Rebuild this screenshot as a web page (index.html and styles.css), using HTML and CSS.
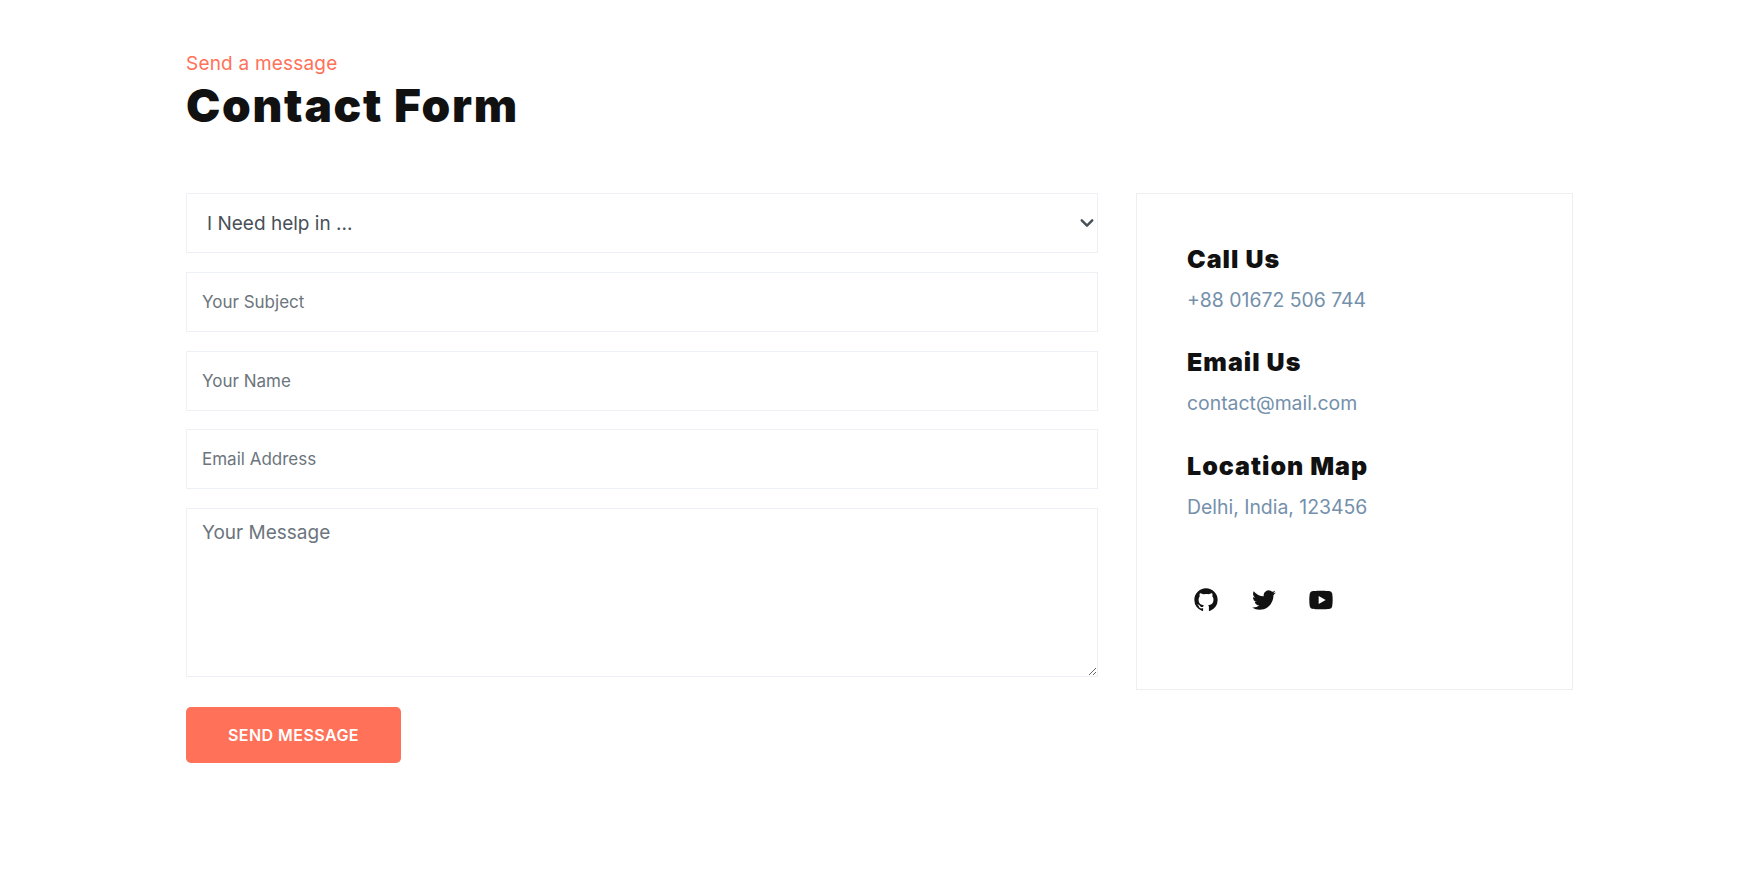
FILE: index.html
```html
<!DOCTYPE html>
<html lang="en">
<head>
	<meta charset="UTF-8">
	<title>Contact Form</title>
	<link rel="stylesheet" href="styles.css">
</head>
<body>
	<section class="contact">
		<div class="section-title">
			<span class="subtitle">Send a message</span>
			<h2>Contact Form</h2>
		</div>
		<div class="contact-row">
			<form class="contact-form">
				<select class="field field-select">
					<option>I Need help in ...</option>
				</select>
				<input class="field" type="text" placeholder="Your Subject">
				<input class="field" type="text" placeholder="Your Name">
				<input class="field" type="email" placeholder="Email Address">
				<textarea class="field field-message" placeholder="Your Message"></textarea>
				<button class="send-btn" type="button">SEND MESSAGE</button>
			</form>
			<aside class="contact-info">
				<div class="info-item">
					<h4>Call Us</h4>
					<p>+88 01672 506 744</p>
				</div>
				<div class="info-item">
					<h4>Email Us</h4>
					<p>contact@mail.com</p>
				</div>
				<div class="info-item">
					<h4>Location Map</h4>
					<p>Delhi, India, 123456</p>
				</div>
				<div class="social">
					<a href="#" aria-label="GitHub">
						<svg viewBox="0 0 24 24"><path d="M12 2C6.475 2 2 6.475 2 12a9.994 9.994 0 0 0 6.838 9.488c.5.087.687-.213.687-.476 0-.237-.013-1.024-.013-1.862-2.512.463-3.162-.612-3.362-1.175-.113-.288-.6-1.175-1.025-1.413-.35-.187-.85-.65-.013-.662.788-.013 1.35.725 1.538 1.025.9 1.512 2.338 1.087 2.912.825.088-.65.35-1.087.638-1.337-2.225-.25-4.55-1.113-4.55-4.938 0-1.088.387-1.987 1.025-2.688-.1-.25-.45-1.275.1-2.65 0 0 .837-.262 2.75 1.026a9.28 9.28 0 0 1 2.5-.338c.85 0 1.7.112 2.5.337 1.912-1.3 2.75-1.024 2.75-1.024.55 1.375.2 2.4.1 2.65.637.7 1.025 1.587 1.025 2.687 0 3.838-2.337 4.688-4.562 4.938.362.312.675.912.675 1.85 0 1.337-.013 2.412-.013 2.75 0 .262.188.574.688.474A10.016 10.016 0 0 0 22 12c0-5.525-4.475-10-10-10z"/></svg>
					</a>
					<a href="#" aria-label="Twitter">
						<svg viewBox="0 0 24 24"><path d="M22.162 5.656a8.384 8.384 0 0 1-2.402.658A4.196 4.196 0 0 0 21.6 4c-.82.488-1.719.83-2.656 1.015a4.182 4.182 0 0 0-7.126 3.814 11.874 11.874 0 0 1-8.62-4.37 4.168 4.168 0 0 0-.566 2.103c0 1.45.738 2.731 1.86 3.481a4.168 4.168 0 0 1-1.894-.523v.052a4.185 4.185 0 0 0 3.355 4.101 4.21 4.21 0 0 1-1.89.072A4.185 4.185 0 0 0 7.97 16.65a8.394 8.394 0 0 1-6.191 1.732 11.83 11.83 0 0 0 6.41 1.88c7.693 0 11.9-6.373 11.9-11.9 0-.18-.005-.362-.013-.54a8.496 8.496 0 0 0 2.087-2.165z"/></svg>
					</a>
					<a href="#" aria-label="YouTube">
						<svg viewBox="0 0 24 24"><path d="M21.543 6.498C22 8.28 22 12 22 12s0 3.72-.457 5.502c-.254.985-.997 1.76-1.938 2.022C17.896 20 12 20 12 20s-5.893 0-7.605-.476c-.945-.266-1.687-1.04-1.938-2.022C2 15.72 2 12 2 12s0-3.72.457-5.502c.254-.985.997-1.76 1.938-2.022C6.107 4 12 4 12 4s5.896 0 7.605.476c.945.266 1.687 1.04 1.938 2.022zM10 15.5l6-3.5-6-3.5v7z"/></svg>
					</a>
				</div>
			</aside>
		</div>
	</section>
</body>
</html>
```

FILE: styles.css
```css
* {
	box-sizing: border-box;
	padding: 0;
	margin: 0;
}
body {
	font-family: "Inter", "Noto Sans", sans-serif;
	color: #111;
	background-color: #fff;
}
.contact {
	width: 1387px;
	margin-left: 186px;
	padding-top: 50px;
}
.section-title {
	height: 143px;
}
.subtitle {
	display: block;
	font-size: 19px;
	line-height: 27px;
	letter-spacing: 0.2px;
	color: #ff7158;
}
.section-title h2 {
	margin-top: 2px;
	font-size: 46px;
	font-weight: 900;
	line-height: 53px;
	letter-spacing: 1.7px;
	color: #111;
}
.contact-row {
	display: flex;
	align-items: flex-start;
	gap: 38px;
}
.contact-form {
	display: flex;
	flex-direction: column;
	align-items: flex-start;
	width: 912px;
}
.field {
	display: block;
	width: 100%;
	height: 60px;
	padding: 0 15px;
	margin-bottom: 18.75px;
	font-family: inherit;
	font-size: 17px;
	color: #6c757d;
	background-color: #fff;
	border: 1px solid #edf0f5;
	outline: none;
}
.field::placeholder {
	color: #6c757d;
	opacity: 1;
}
.field-select {
	padding-left: 20px;
	font-size: 19px;
	color: #495057;
	appearance: none;
	background: #fff url("data:image/svg+xml,%3csvg xmlns='http://www.w3.org/2000/svg' viewBox='0 0 16 16'%3e%3cpath fill='none' stroke='%23495057' stroke-linecap='round' stroke-linejoin='round' stroke-width='2.8' d='M2 5l6 6 6-6'/%3e%3c/svg%3e") no-repeat right 3px center / 14px 14px;
}
.field-message {
	height: 169px;
	padding-top: 10px;
	margin-bottom: 30px;
	font-size: 19px;
	line-height: 28px;
}
.send-btn {
	width: 215px;
	height: 56px;
	padding-bottom: 1px;
	font-family: inherit;
	font-size: 16px;
	font-weight: 600;
	letter-spacing: 0.45px;
	color: #fff;
	background-color: #ff7158;
	border: none;
	border-radius: 5px;
}
.contact-info {
	width: 437px;
	height: 497px;
	padding: 50px;
	border: 1px solid #eee;
}
.info-item {
	margin-bottom: 32.3px;
}
.info-item h4 {
	font-size: 25px;
	font-weight: 900;
	line-height: 30px;
	letter-spacing: 1px;
	color: #111;
}
.info-item p {
	margin-top: 11px;
	font-size: 19.4px;
	line-height: 30px;
	color: #7490ab;
}
.social {
	display: flex;
	gap: 29.5px;
	margin-top: 64px;
	margin-left: 5px;
}
.social a {
	display: block;
	width: 28px;
	height: 28px;
}
.social svg {
	display: block;
	width: 28px;
	height: 28px;
	fill: #111;
}
```
